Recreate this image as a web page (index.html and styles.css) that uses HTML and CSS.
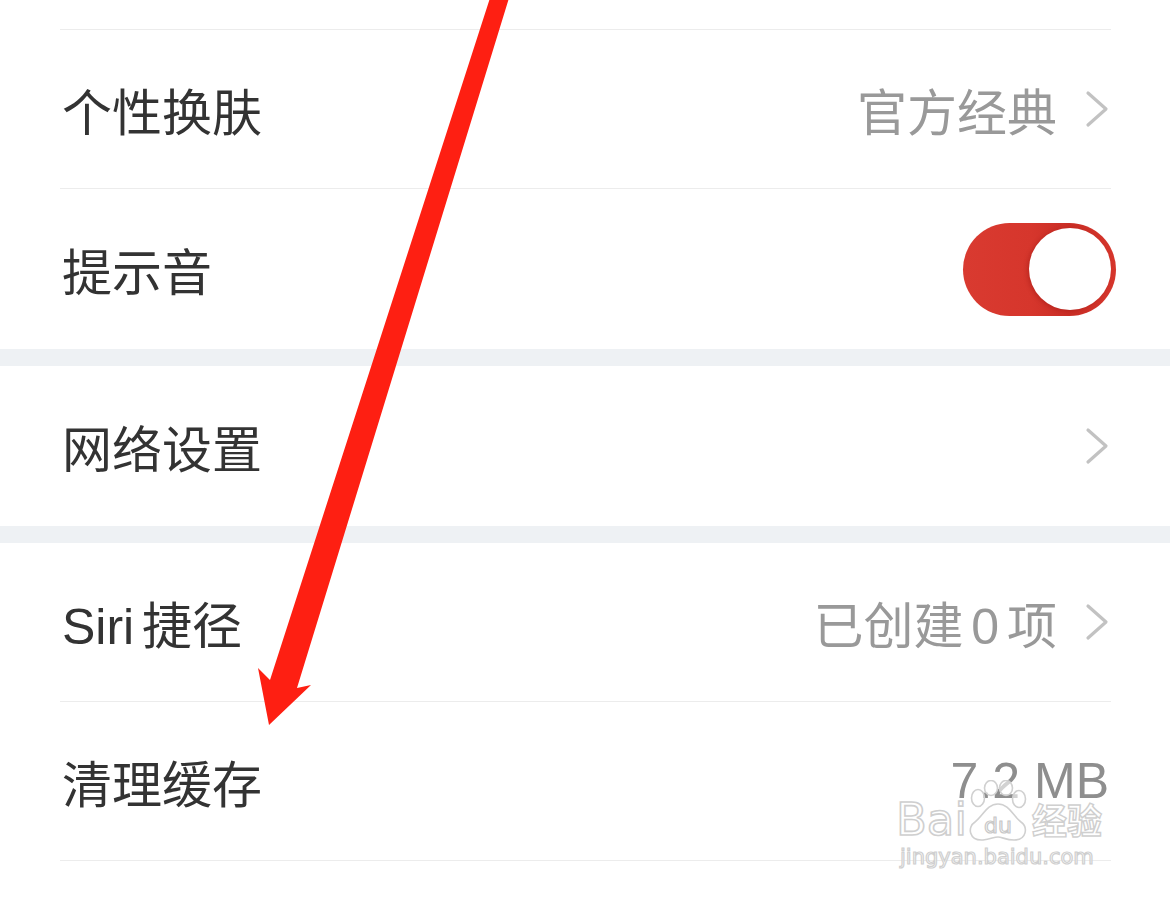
FILE: index.html
```html
<!DOCTYPE html>
<html lang="zh-CN">
<head>
<meta charset="utf-8">
<title>设置</title>
<link rel="stylesheet" href="styles.css">
</head>
<body>
<div class="page">
  <section class="group">
    <div class="row row-stub"></div>
    <div class="row">
      <span class="label">个性换肤</span>
      <span class="value">官方经典<svg class="chev" viewBox="0 0 24 38"><polyline points="3,3 21,19 3,35"/></svg></span>
    </div>
    <div class="row row-last row-tall">
      <span class="label">提示音</span>
      <span class="switch"><span class="knob"></span></span>
    </div>
  </section>
  <div class="band"></div>
  <section class="group">
    <div class="row row-last row-tall">
      <span class="label">网络设置</span>
      <span class="value"><svg class="chev" viewBox="0 0 24 38"><polyline points="3,3 21,19 3,35"/></svg></span>
    </div>
  </section>
  <div class="band"></div>
  <section class="group">
    <div class="row row-siri">
      <span class="label tight">Siri 捷径</span>
      <span class="value tight">已创建 0 项<svg class="chev" viewBox="0 0 24 38"><polyline points="3,3 21,19 3,35"/></svg></span>
    </div>
    <div class="row">
      <span class="label">清理缓存</span>
      <span class="value value-plain">7.2 MB</span>
    </div>
  </section>

  <svg class="arrow" viewBox="0 0 1170 897" width="1170" height="897">
    <polygon points="490,-2 509,-2 297,688 311,685 269,725 258,668 270,680"/>
  </svg>

  <div class="watermark">
    <div class="wm-top">
      <span class="wm-bai">Bai</span>
      <svg class="wm-paw" viewBox="0 0 66 62" width="66" height="62">
        <ellipse cx="13" cy="18" rx="6.5" ry="8.5"/>
        <ellipse cx="26" cy="8" rx="6.5" ry="7.5"/>
        <ellipse cx="41" cy="8" rx="6.5" ry="7.5"/>
        <ellipse cx="54" cy="19" rx="6.5" ry="8.5"/>
        <path d="M33 24 C22 24 18 36 10 42 C2 47 4 61 18 60 C26 59 29 57 33 57 C37 57 41 60 49 60 C62 60 63 47 56 42 C48 36 44 24 33 24 Z"/>
        <text x="33" y="53" text-anchor="middle">du</text>
      </svg>
      <span class="wm-jy">经验</span>
    </div>
    <div class="wm-url">jingyan.baidu.com</div>
  </div>
</div>
</body>
</html>
```

FILE: styles.css
```css
* { box-sizing: border-box; }

html, body {
  margin: 0;
  padding: 0;
  background: #ffffff;
}

body {
  font-family: "Liberation Sans", "Noto Sans CJK SC", sans-serif;
  width: 1170px;
  height: 897px;
  overflow: hidden;
}

.page {
  position: relative;
  width: 1170px;
  height: 897px;
  background: #ffffff;
}

.group {
  background: #ffffff;
}

.band {
  height: 17px;
  background: #eef1f4;
}

.row {
  display: flex;
  align-items: center;
  justify-content: space-between;
  height: 159px;
  margin: 0 59px 0 60px;
  border-bottom: 1px solid #ececec;
}

.row-stub {
  height: 30px;
}

.row-last {
  border-bottom: none;
}

.row-tall {
  height: 160px;
}

.label {
  font-size: 50px;
  color: #333333;
  padding-left: 2px;
}

.value {
  display: flex;
  align-items: center;
  font-size: 50px;
  color: #999999;
}

.tight {
  word-spacing: -6px;
}

.value-plain {
  margin-right: 2px;
  color: #8e8e8e;
}

.chev {
  width: 24px;
  height: 38px;
  margin-left: 28px;
  margin-right: 2px;
  fill: none;
  stroke: #c2c2c2;
  stroke-width: 3.2;
  stroke-linecap: round;
  stroke-linejoin: round;
}

.switch {
  display: flex;
  align-items: center;
  justify-content: flex-end;
  width: 153px;
  height: 93px;
  margin-right: -5px;
  padding: 0 5px 0 0;
  border-radius: 47px;
  background: linear-gradient(90deg, #d93a30 0%, #d6362c 45%, #c92d25 70%, #d6362c 100%);
}

.knob {
  width: 82px;
  height: 82px;
  border-radius: 50%;
  background: #ffffff;
  box-shadow: -2px 1px 4px rgba(120, 0, 0, 0.25);
}

.arrow {
  position: absolute;
  left: 0;
  top: 0;
  pointer-events: none;
}

.arrow polygon {
  fill: #fe1f12;
}

.watermark {
  position: absolute;
  left: 896px;
  top: 784px;
  width: 215px;
  pointer-events: none;
}

.wm-top {
  display: flex;
  align-items: flex-end;
  height: 58px;
}

.wm-bai {
  font-family: "DejaVu Sans", sans-serif;
  font-size: 45px;
  line-height: 44px;
  color: rgba(255, 255, 255, 0.85);
  -webkit-text-stroke: 1.6px #cfcfcf;
}

.wm-paw {
  margin: 0 1px 0 -2px;
}

.wm-paw ellipse,
.wm-paw path {
  fill: rgba(255, 255, 255, 0.6);
  stroke: #d0d0d0;
  stroke-width: 1.6;
}

.wm-paw text {
  font-family: "DejaVu Sans", sans-serif;
  font-size: 22px;
  fill: rgba(255, 255, 255, 0.85);
  stroke: #c8c8c8;
  stroke-width: 1.2;
}

.wm-jy {
  font-family: "Noto Sans CJK SC", sans-serif;
  font-weight: 700;
  font-size: 35px;
  line-height: 46px;
  color: rgba(255, 255, 255, 0.85);
  -webkit-text-stroke: 1.4px #cfcfcf;
}

.wm-url {
  font-family: "DejaVu Sans", sans-serif;
  font-size: 21px;
  line-height: 26px;
  margin-top: 2px;
  padding-left: 4px;
  color: rgba(255, 255, 255, 0.85);
  -webkit-text-stroke: 1.2px #cfcfcf;
}
```
